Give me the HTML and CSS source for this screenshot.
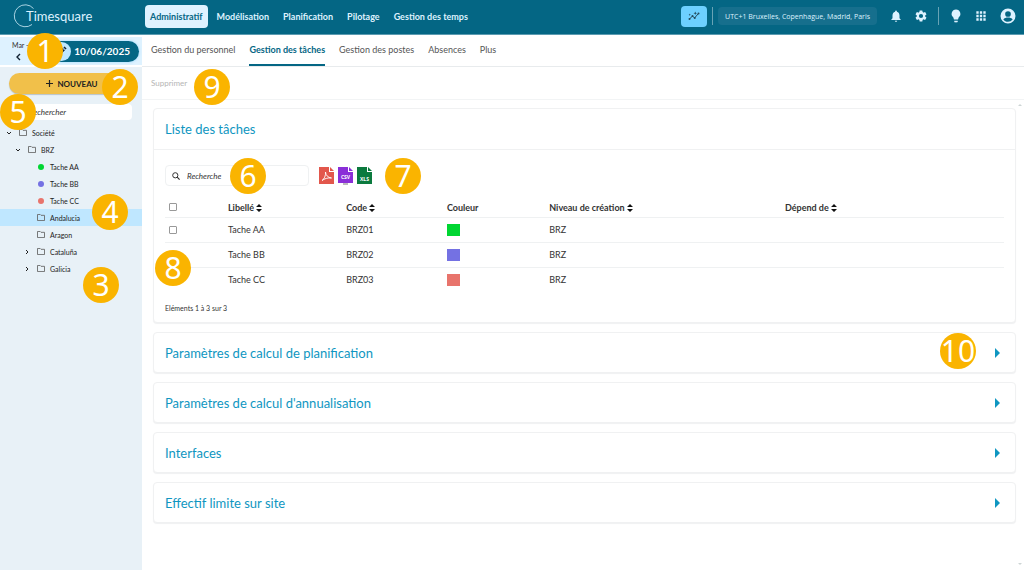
FILE: index.html
```html
<!DOCTYPE html>
<html lang="fr">
<head>
<meta charset="utf-8">
<title>Timesquare – Gestion des tâches</title>
<link rel="stylesheet" href="styles.css">
</head>
<body>
<div class="app">
  <header class="topbar">
    <a class="brand" href="#" aria-label="Timesquare">
      <svg class="brand-ring" viewBox="0 0 24 24" aria-hidden="true"><path d="M20.5 4.500A11 11 0 1 0 19 20.500" fill="none" stroke="#a9d3e2" stroke-width="1"/></svg>
      <span class="brand-name">Timesquare</span>
    </a>
    <nav class="mainnav">
      <a class="mainnav-link is-active" href="#">Administratif</a>
      <a class="mainnav-link" href="#">Modélisation</a>
      <a class="mainnav-link" href="#">Planification</a>
      <a class="mainnav-link" href="#">Pilotage</a>
      <a class="mainnav-link" href="#">Gestion des temps</a>
    </nav>
    <div class="tools">
      <button class="insights" type="button" aria-label="Analyses">
        <svg width="12" height="12" viewBox="0 0 24 24"><path d="M3 18l6-6 4 4 7-8" fill="none" stroke="#234a5c" stroke-width="2"/><circle cx="3" cy="18" r="2" fill="#234a5c"/><circle cx="9" cy="12" r="2" fill="#234a5c"/><circle cx="13.500" cy="16" r="2" fill="#234a5c"/><circle cx="21" cy="7" r="2" fill="#234a5c"/><path d="M14.500 3l1 2.500 2.500 1-2.500 1-1 2.500-1-2.500-2.500-1 2.500-1zM3.500 7l.7 1.800 1.800.7-1.800.7-.7 1.800-.7-1.800L1 9.500l1.800-.7z" fill="#234a5c"/></svg>
      </button>
      <span class="divider"></span>
      <button class="timezone" type="button">UTC+1 Bruxelles, Copenhague, Madrid, Paris</button>
      <button class="tool" type="button" aria-label="Notifications">
        <svg width="14" height="14" viewBox="0 0 24 24"><path fill="#def2ff" d="M12 22c1.100 0 2-.9 2-2h-4c0 1.100.9 2 2 2zm6-6v-5c0-3.070-1.630-5.640-4.500-6.320V4a1.500 1.500 0 0 0-3 0v.68C7.640 5.360 6 7.920 6 11v5l-2 2v1h16v-1z"/></svg>
      </button>
      <button class="tool gear" type="button" aria-label="Paramètres">
        <svg width="14" height="14" viewBox="0 0 24 24"><path fill="#def2ff" d="M19.140 12.940c.04-.3.060-.61.060-.94 0-.32-.02-.64-.07-.94l2.030-1.580a.49.49 0 0 0 .12-.61l-1.920-3.320a.49.49 0 0 0-.59-.22l-2.390.96c-.5-.38-1.030-.7-1.620-.94l-.36-2.540A.48.48 0 0 0 13.920 2.400h-3.840c-.24 0-.43.17-.47.41l-.36 2.540c-.59.24-1.130.57-1.620.94l-2.390-.96a.48.48 0 0 0-.59.22L2.740 8.870c-.12.210-.08.470.12.610l2.030 1.580c-.05.300-.09.630-.09.940s.02.640.07.940l-2.030 1.580a.49.49 0 0 0-.12.610l1.920 3.320c.12.220.37.290.59.220l2.390-.96c.5.380 1.030.700 1.620.940l.36 2.540c.05.240.24.410.48.410h3.840c.24 0 .44-.17.47-.41l.36-2.540c.59-.24 1.130-.56 1.620-.94l2.390.96c.22.080.47 0 .59-.22l1.920-3.320a.49.49 0 0 0-.12-.61zM12 15.600A3.600 3.600 0 1 1 12 8.400a3.600 3.600 0 0 1 0 7.200z"/></svg>
      </button>
      <span class="divider wide"></span>
      <button class="tool" type="button" aria-label="Aide">
        <svg width="14" height="14" viewBox="0 0 24 24"><path fill="#def2ff" d="M9 20h6v1.500c0 1-1 1.500-3 1.500s-3-.5-3-1.500zM12 1a7.500 7.500 0 0 0-4.500 13.500L8.500 18h7l1-3.500A7.500 7.500 0 0 0 12 1z"/></svg>
      </button>
      <button class="tool" type="button" aria-label="Applications">
        <svg width="14" height="14" viewBox="0 0 24 24"><path fill="#def2ff" d="M4 4h4v4H4zm6 0h4v4h-4zm6 0h4v4h-4zM4 10h4v4H4zm6 0h4v4h-4zm6 0h4v4h-4zM4 16h4v4H4zm6 0h4v4h-4zm6 0h4v4h-4z"/></svg>
      </button>
      <button class="tool" type="button" aria-label="Mon compte">
        <svg width="18" height="18" viewBox="0 0 24 24"><path fill="#def2ff" fill-rule="evenodd" d="M12 2a10 10 0 1 0 0 20 10 10 0 0 0 0-20zm0 3.500a3.800 3.800 0 1 1 0 7.600 3.800 3.800 0 0 1 0-7.600zm0 14.200c-2.600 0-4.800-1.300-6.200-3.200.9-1.600 4-2.500 6.200-2.500s5.300.9 6.200 2.500a7.600 7.600 0 0 1-6.200 3.200z"/></svg>
      </button>
    </div>
  </header>

  <div class="body">
    <aside class="sidebar">
      <div class="datebar">
        <div class="dayblock">
          <span>Mar -</span>
          <button class="plain" type="button" aria-label="Jour précédent"><svg width="6" height="8" viewBox="0 0 6 8"><path d="M5 1L2 4l3 3" fill="none" stroke="#123" stroke-width="1.400"/></svg></button>
        </div>
        <button class="datepill" type="button">
          <span class="pencil"><svg width="10" height="10" viewBox="0 0 24 24"><path fill="#123" d="M2 22l1-6L14 5l5 5L8 21zM15.500 3.500L18 1l5 5-2.500 2.500z"/><path d="M6 18L16 8" stroke="#bfe7ff" stroke-width="1.500"/></svg></span>
          10/06/2025
        </button>
      </div>
      <div class="side-content">
        <button class="new" type="button"><svg width="7" height="7" viewBox="0 0 7 7"><path d="M3.500 0v7M0 3.500h7" stroke="#222" stroke-width="1.200"/></svg>NOUVEAU</button>
        <input class="side-search" type="search" placeholder="Rechercher" aria-label="Rechercher">
      </div>
      <ul class="tree">
        <li class="node level-1"><svg class="chev" viewBox="0 0 6 6"><path d="M1 2l2 2 2-2"/></svg><svg class="folder" viewBox="0 0 9 8"><path d="M.5 7.500v-7h3l1 1h4v6z"/></svg>Société</li>
        <li class="node level-2"><svg class="chev" viewBox="0 0 6 6"><path d="M1 2l2 2 2-2"/></svg><svg class="folder" viewBox="0 0 9 8"><path d="M.5 7.500v-7h3l1 1h4v6z"/></svg>BRZ</li>
        <li class="node level-3"><span class="chev"></span><span class="dot green"></span>Tache AA</li>
        <li class="node level-3"><span class="chev"></span><span class="dot violet"></span>Tache BB</li>
        <li class="node level-3"><span class="chev"></span><span class="dot coral"></span>Tache CC</li>
        <li class="node level-3 is-selected"><span class="chev"></span><svg class="folder" viewBox="0 0 9 8"><path d="M.5 7.500v-7h3l1 1h4v6z"/></svg>Andalucia</li>
        <li class="node level-3"><span class="chev"></span><svg class="folder" viewBox="0 0 9 8"><path d="M.5 7.500v-7h3l1 1h4v6z"/></svg>Aragon</li>
        <li class="node level-3"><svg class="chev" viewBox="0 0 6 6"><path d="M2 1l2 2-2 2"/></svg><svg class="folder" viewBox="0 0 9 8"><path d="M.5 7.500v-7h3l1 1h4v6z"/></svg>Cataluña</li>
        <li class="node level-3"><svg class="chev" viewBox="0 0 6 6"><path d="M2 1l2 2-2 2"/></svg><svg class="folder" viewBox="0 0 9 8"><path d="M.5 7.500v-7h3l1 1h4v6z"/></svg>Galicia</li>
      </ul>
    </aside>

    <main class="main">
      <nav class="tabs">
        <a class="tab" href="#">Gestion du personnel</a>
        <a class="tab is-active" href="#">Gestion des tâches</a>
        <a class="tab" href="#">Gestion des postes</a>
        <a class="tab" href="#">Absences</a>
        <a class="tab" href="#">Plus</a>
      </nav>
      <div class="actions"><button class="delete" type="button" disabled>Supprimer</button></div>
      <div class="panels">
        <section class="card">
          <h2 class="card-title list-title">Liste des tâches</h2>
          <div class="card-body">
            <div class="list-tools">
              <label class="search">
                <svg width="8" height="8" viewBox="0 0 8 8"><circle cx="3.300" cy="3.300" r="2.600" fill="none" stroke="#333"/><path d="M5.200 5.200L7.600 7.600" stroke="#333" stroke-width="1.200"/></svg>
                <input class="search-input" type="search" placeholder="Recherche" aria-label="Recherche">
              </label>
              <div class="exports">
                <button class="plain" type="button" aria-label="Exporter en PDF"><svg width="15" height="17" viewBox="0 0 15 17"><path fill="#e2574c" d="M0 0h10v5h5v12H0z"/><path fill="#e2574c" d="M11 0l4 4h-4z"/><path d="M3 13.500c2-1 4-5 3.500-8.500.3 3.500 2.500 5.500 6 6-4-.5-7 .8-9.500 2.500z" fill="none" stroke="#fff" stroke-width=".9"/></svg></button>
                <button class="plain" type="button" aria-label="Exporter en CSV"><svg width="15" height="18" viewBox="0 0 15 18"><path fill="#8a2fd8" d="M0 0h10v5h5v11H0z"/><path fill="#8a2fd8" d="M11 0l4 4h-4z"/><path d="M5 17h5" stroke="#777"/><text class="file-type" x="7.500" y="12">CSV</text></svg></button>
                <button class="plain" type="button" aria-label="Exporter en XLS"><svg width="15" height="17" viewBox="0 0 15 17"><path fill="#0b7a3e" d="M0 0h10v5h5v12H0z"/><path fill="#0b7a3e" d="M11 0l4 4h-4z"/><text class="file-type" x="7.500" y="14">XLS</text></svg></button>
              </div>
            </div>
            <table class="tasks">
              <colgroup><col class="c-check"><col class="c-label"><col class="c-code"><col class="c-color"><col class="c-level"><col></colgroup>
              <thead>
                <tr>
                  <th><input class="check" type="checkbox" aria-label="Tout sélectionner"></th>
                  <th>Libellé <svg class="sort" viewBox="0 0 6 8"><path d="M0 3l3-3 3 3zM0 5h6L3 8z"/></svg></th>
                  <th>Code <svg class="sort" viewBox="0 0 6 8"><path d="M0 3l3-3 3 3zM0 5h6L3 8z"/></svg></th>
                  <th>Couleur</th>
                  <th>Niveau de création <svg class="sort" viewBox="0 0 6 8"><path d="M0 3l3-3 3 3zM0 5h6L3 8z"/></svg></th>
                  <th>Dépend de <svg class="sort" viewBox="0 0 6 8"><path d="M0 3l3-3 3 3zM0 5h6L3 8z"/></svg></th>
                </tr>
              </thead>
              <tbody>
                <tr><td><input class="check" type="checkbox" aria-label="Tache AA"></td><td>Tache AA</td><td>BRZ01</td><td><span class="swatch green"></span></td><td>BRZ</td><td></td></tr>
                <tr><td><input class="check" type="checkbox" aria-label="Tache BB"></td><td>Tache BB</td><td>BRZ02</td><td><span class="swatch violet"></span></td><td>BRZ</td><td></td></tr>
                <tr><td><input class="check" type="checkbox" aria-label="Tache CC"></td><td>Tache CC</td><td>BRZ03</td><td><span class="swatch coral"></span></td><td>BRZ</td><td></td></tr>
              </tbody>
            </table>
            <p class="count">Eléments 1 à 3 sur 3</p>
          </div>
        </section>
        <button class="card fold" type="button"><span class="card-title">Paramètres de calcul de planification</span><span class="arrow"></span></button>
        <button class="card fold" type="button"><span class="card-title">Paramètres de calcul d'annualisation</span><span class="arrow"></span></button>
        <button class="card fold" type="button"><span class="card-title">Interfaces</span><span class="arrow"></span></button>
        <button class="card fold" type="button"><span class="card-title">Effectif limite sur site</span><span class="arrow"></span></button>
      </div>
    </main>
  </div>

  <span class="marker m1">1</span>
  <span class="marker m2">2</span>
  <span class="marker m3">3</span>
  <span class="marker m4">4</span>
  <span class="marker m5">5</span>
  <span class="marker m6">6</span>
  <span class="marker m7">7</span>
  <span class="marker m8">8</span>
  <span class="marker m9">9</span>
  <span class="marker m10">10</span>
</div>
</body>
</html>
```
FILE: styles.css
```css
* { box-sizing: border-box; }
body { margin: 0; font-family: Lato, "Open Sans", sans-serif; font-size: 9px; color: #333; background: #fff; }
button, input { font: inherit; color: inherit; margin: 0; }
button { border: 0; background: none; padding: 0; }
a { text-decoration: none; color: inherit; }
svg { display: block; flex: none; }
.app { position: relative; display: flex; flex-direction: column; min-height: 100vh; overflow: hidden; }

.topbar { display: flex; align-items: center; height: 35px; padding: 0 7px 2px 13px; background: #046684; border-bottom: 1px solid #5b9bb1; color: #def2ff; }
.brand { display: flex; align-items: center; width: 132px; }
.brand-ring { width: 24px; height: 24px; margin-right: -11px; }
.brand-name { font-size: 13px; font-weight: 400; }
.mainnav { display: flex; align-items: center; }
.mainnav-link { padding: 0 5px; margin-right: 4px; font-size: 9px; line-height: 23px; font-weight: 700; border-radius: 4px; }
.mainnav-link.is-active { background: #def2ff; color: #046684; }
.tools { display: flex; align-items: center; margin-left: auto; }
.insights { display: flex; align-items: center; justify-content: center; width: 26px; height: 21px; border-radius: 4px; background: #6dd0ff; }
.divider { width: 1px; height: 18px; margin: 0 5px; background: #68a3b5; }
.divider.wide { margin: 0 10px; }
.timezone { height: 18px; padding: 0 7px; margin-right: 12px; border-radius: 4px; background: #166f8d; font-family: "Open Sans", sans-serif; font-size: 7px; }
.tool { display: flex; margin-right: 11px; }
.tool.gear { margin-right: 0; }
.tool:last-child { margin-right: 0; }

.body { display: flex; flex: 1; }
.sidebar { width: 142px; flex: none; background: #e8f1f7; }
.datebar { display: flex; align-items: center; justify-content: space-between; height: 32px; padding-right: 3px; background: #def2ff; border-top: 2px solid #fff; border-bottom: 2px solid #fff; }
.dayblock { display: flex; flex-direction: column; gap: 3px; padding-left: 12px; font-size: 7px; line-height: 9px; white-space: nowrap; }
.plain { display: block; }
.dayblock .plain { padding-left: 3px; }
.datepill { display: flex; align-items: center; gap: 3px; height: 21px; padding: 0 9px 0 1px; border-radius: 11px; background: #046684; color: #fff; font-size: 10px; font-weight: 700; box-shadow: 0 0 2px 1px #bfe7ff; }
.pencil { display: flex; align-items: center; justify-content: center; width: 19px; height: 19px; border-radius: 10px; background: #bfe7ff; }
.side-content { display: flex; flex-direction: column; gap: 10px; padding: 6px 10px 4px 9px; }
.new { display: flex; align-items: center; justify-content: center; gap: 4px; height: 21px; padding-left: 3px; border-radius: 11px; background: #f1c04a; color: #222; font-size: 8px; font-weight: 700; box-shadow: 0 1px 1px #b9c3c8; }
.side-search { width: 100%; height: 16px; padding: 0 20px; border: 0; border-radius: 4px; background: #fff; font-size: 8px; font-style: italic; }
.side-search::placeholder, .search-input::placeholder { color: #333; opacity: 1; }
.tree { list-style: none; margin: 0; padding: 0; }
.node { display: flex; align-items: center; height: 17px; font-size: 7px; color: #222; }
.level-1 { padding-left: 6px; }
.level-2 { padding-left: 15px; }
.level-3 { padding-left: 24px; }
.is-selected { background: #bfe7ff; }
.chev { width: 6px; height: 6px; margin-right: 7px; fill: none; stroke: #222; }
.folder { width: 8px; height: 7px; margin-right: 5px; fill: none; stroke: #666; }
.dot { width: 6px; height: 6px; margin: 0 6px 0 1px; border-radius: 3px; }
.green { background: #00d632; }
.violet { background: #7471e3; }
.coral { background: #e8746c; }

.main { position: relative; flex: 1; min-width: 0; }
.main::before, .main::after { content: ""; position: absolute; right: 2px; border: 2px solid transparent; }
.main::before { top: 67px; border-bottom-color: #cdd5d5; }
.main::after { bottom: 3px; border-top-color: #cdd5d5; }
.tabs { display: flex; gap: 14px; height: 32px; padding-left: 9px; border-bottom: 1px solid #e8ebed; }
.tab { display: flex; align-items: center; font-size: 9px; color: #555; border-bottom: 2px solid transparent; }
.tab.is-active { color: #046684; font-weight: 700; border-color: #046684; }
.actions { display: flex; align-items: center; height: 33px; padding-left: 9px; border-bottom: 1px solid #f2f4f5; }
.delete { font-size: 8px; color: #b5b5b5; }
.panels { display: flex; flex-direction: column; gap: 9px; padding: 8px 8px 0 11px; }
.card { border: 1px solid #f0f1f2; border-radius: 4px; background: #fff; box-shadow: 0 1px 1px #f0f1f2; }
.card-title { margin: 0; font-size: 13px; line-height: 16px; font-weight: 400; color: #0f96c1; }
.list-title { padding: 12px 11px; border-bottom: 1px solid #f0f1f2; }
.card-body { padding: 15px 11px 8px; }
.list-tools { display: flex; align-items: center; gap: 10px; }
.search { display: flex; align-items: center; gap: 7px; width: 144px; height: 21px; padding: 0 6px; border: 1px solid #eff1f2; border-radius: 4px; }
.search-input { flex: 1; min-width: 0; padding: 0; border: 0; background: none; font-size: 8px; font-style: italic; }
.exports { display: flex; gap: 4px; }
.file-type { font: 700 5px "Open Sans", sans-serif; fill: #fff; text-anchor: middle; }
.tasks { width: 100%; margin-top: 12px; table-layout: fixed; border-collapse: collapse; font-size: 9px; }
.c-check { width: 7.5%; }
.c-label { width: 14.1%; }
.c-code { width: 12%; }
.c-color { width: 12.2%; }
.c-level { width: 28.1%; }
.tasks th, .tasks td { height: 25px; padding: 0; text-align: left; border-top: 1px solid #eff1f2; }
.tasks th { height: 19px; border-top: 0; font-weight: 700; }
.sort { display: inline-block; width: 6px; height: 8px; vertical-align: -1px; fill: #111; }
.check { appearance: none; display: block; width: 8px; height: 8px; margin-left: 4px; border: 1px solid #999; border-radius: 1px; background: #fff; }
.swatch { display: block; width: 13px; height: 12px; }
.count { margin: 10px 0 0; font-size: 7px; line-height: 12px; }
.fold { display: flex; align-items: center; justify-content: space-between; height: 41px; padding: 0 15px 0 11px; text-align: left; }
.arrow { border: 5px solid transparent; border-left-color: #0f96c1; border-right: 0; }

.marker { position: absolute; width: 36px; height: 36px; border-radius: 18px; background: #fab400; color: #fff; font: 30px/36px "Noto Sans", sans-serif; text-align: center; }
.m1 { left: 27px; top: 33px; }
.m2 { left: 102px; top: 69px; }
.m3 { left: 83px; top: 267px; }
.m4 { left: 92px; top: 194px; }
.m5 { left: 0; top: 94px; }
.m6 { left: 230px; top: 158px; }
.m7 { left: 385px; top: 158px; }
.m8 { left: 155px; top: 250px; }
.m9 { left: 194px; top: 69px; }
.m10 { right: 48px; top: 333px; }
```
